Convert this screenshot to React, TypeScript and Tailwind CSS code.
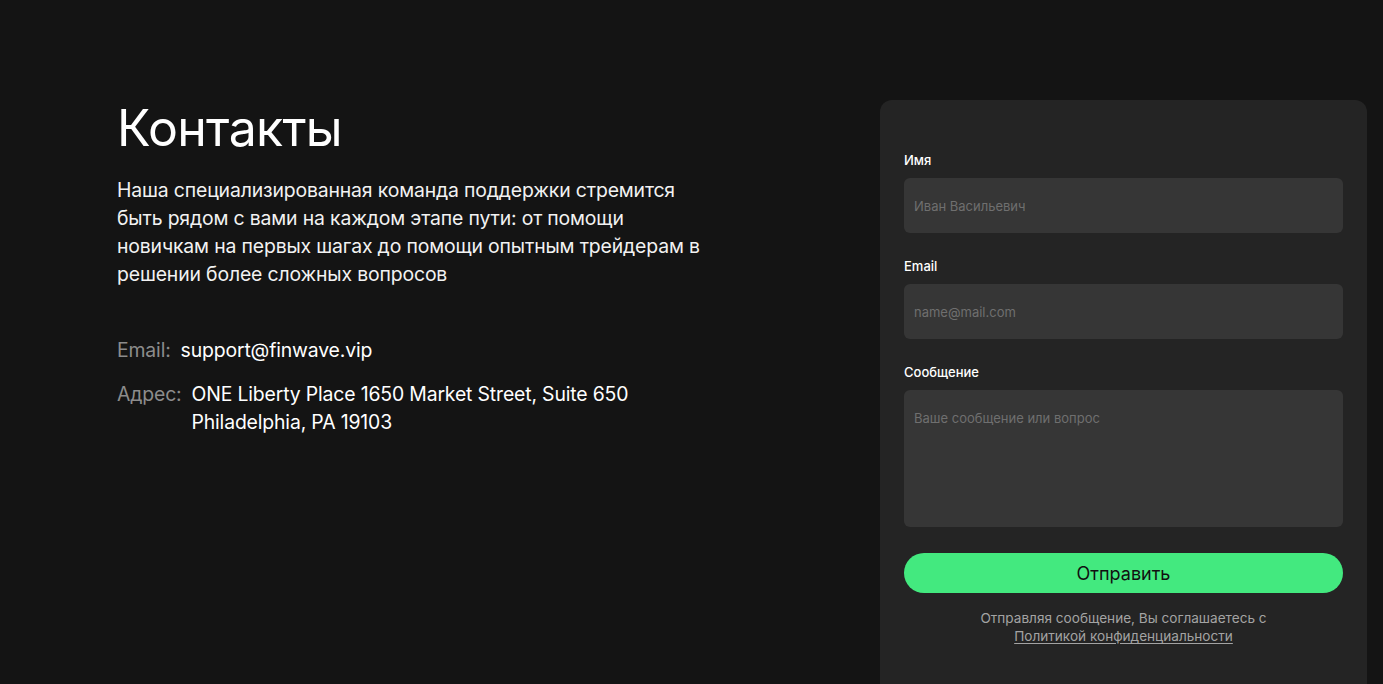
import { useState } from 'react';

export default function App() {
  const [name, setName] = useState('');
  const [email, setEmail] = useState('');
  const [message, setMessage] = useState('');

  const font = { fontFamily: 'Inter, "Noto Sans", sans-serif' };

  return (
    <div
      className="h-[684px] w-full bg-[#141414] text-white overflow-hidden"
      style={font}
    >
      <div className="flex justify-between pl-[117px] pr-[16px] pt-[100px]">
        {/* Left: info */}
        <div className="w-[600px]">
          <h1 className="text-[50px] leading-[56px] font-normal tracking-[-0.7px]">Контакты</h1>
          <p className="mt-[20px] text-[19.4px] leading-[28px] text-[#f2f2f2] max-w-[590px] tracking-[-0.15px]">
            Наша специализированная команда поддержки стремится быть рядом с вами на каждом этапе пути: от помощи новичкам на первых шагах до помощи опытным трейдерам в решении более сложных вопросов
          </p>

          <div className="mt-[48px] flex flex-col gap-[16px] text-[19.4px] leading-[28px] tracking-[-0.15px]">
            <div className="flex gap-[10px]">
              <span className="text-[#8c8c8c]">Email:</span>
              <span>support@finwave.vip</span>
            </div>
            <div className="flex gap-[10px]">
              <span className="text-[#8c8c8c]">Адрес:</span>
              <span>
                ONE Liberty Place 1650 Market Street, Suite 650
                <br />
                Philadelphia, PA 19103
              </span>
            </div>
          </div>
        </div>

        {/* Right: form card */}
        <div className="w-[487px] h-[600px] rounded-[12px] bg-[#242424] px-[24px] pt-[50px]">
          <form className="flex flex-col" onSubmit={(e) => e.preventDefault()}>
            <label className="text-[13px] leading-[20px] font-medium">Имя</label>
            <input
              value={name}
              onChange={(e) => setName(e.target.value)}
              placeholder="Иван Васильевич"
              className="mt-[8px] h-[55px] w-full rounded-[6px] bg-[#363636] px-[10px] text-[13px] text-white placeholder:text-[#6f6f6f] outline-none"
            />

            <label className="mt-[23px] text-[13px] leading-[20px] font-medium">Email</label>
            <input
              value={email}
              onChange={(e) => setEmail(e.target.value)}
              placeholder="name@mail.com"
              className="mt-[8px] h-[55px] w-full rounded-[6px] bg-[#363636] px-[10px] text-[13px] text-white placeholder:text-[#6f6f6f] outline-none"
            />

            <label className="mt-[23px] text-[13px] leading-[20px] font-medium">Сообщение</label>
            <textarea
              value={message}
              onChange={(e) => setMessage(e.target.value)}
              placeholder="Ваше сообщение или вопрос"
              className="mt-[8px] h-[137px] w-full resize-none rounded-[6px] bg-[#363636] px-[10px] pt-[19px] text-[13px] leading-[18px] text-white placeholder:text-[#6f6f6f] outline-none"
            />

            <button
              type="submit"
              className="mt-[26px] h-[40px] w-full rounded-full bg-[#43e97f] text-[18px] text-[#111111]"
            >
              Отправить
            </button>

            <p className="mt-[16px] text-center text-[13.6px] leading-[18px] text-[#a3a3a3]">
              Отправляя сообщение, Вы соглашаетесь с
              <br />
              <a href="#" className="underline underline-offset-2">Политикой конфиденциальности</a>
            </p>
          </form>
        </div>
      </div>
    </div>
  );
}
